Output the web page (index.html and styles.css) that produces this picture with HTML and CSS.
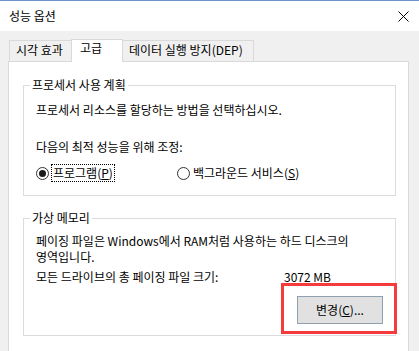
FILE: index.html
```html
<!DOCTYPE html>
<html>
<head>
    <meta charset="utf-8" />
    <link rel="stylesheet" href="styles.css">
</head>
<body>
    <section class="window">
        <header class="titlebar">
            <span class="title">성능 옵션</span>
            <svg class="close" width="11" height="11" viewBox="0 0 11 11">
                <path d="M0.5 0.5 L10.5 10.5 M10.5 0.5 L0.5 10.5" stroke="#000" stroke-width="1" fill="none" />
            </svg>
        </header>

        <div class="dialog">
            <nav class="tabs">
                <span class="tab first">시각 효과</span>
                <span class="tab active">고급</span>
                <span class="tab last">데이터 실행 방지(DEP)</span>
            </nav>

            <div class="panel">
                <fieldset class="group cpu">
                    <legend>프로세서 사용 계획</legend>
                    <p class="line">프로세서 리소스를 할당하는 방법을 선택하십시오.</p>
                    <p class="line adjust">다음의 최적 성능을 위해 조정:</p>
                    <div class="radios">
                        <label class="radio program">
                            <span class="dot checked"></span>
                            <span class="focus">프로그램(<u>P</u>)</span>
                        </label>
                        <label class="radio service">
                            <span class="dot"></span>
                            <span>백그라운드 서비스(<u>S</u>)</span>
                        </label>
                    </div>
                </fieldset>

                <fieldset class="group memory">
                    <legend>가상 메모리</legend>
                    <p class="line">페이징 파일은 Windows에서 RAM처럼 사용하는 하드 디스크의<br>영역입니다.</p>
                    <p class="line total">
                        <span class="total-label">모든 드라이브의 총 페이징 파일 크기:</span>
                        <span>3072 MB</span>
                    </p>
                    <div class="actions">
                        <button class="btn">변경(<u>C</u>)...</button>
                        <div class="highlight"></div>
                    </div>
                </fieldset>
            </div>
        </div>
    </section>
</body>
</html>
```

FILE: styles.css
```css
* {
    padding: 0;
    margin: 0;
    box-sizing: border-box;
}

body {
    width: 419px;
    height: 351px;
    overflow: hidden;
    font-family: "Noto Sans CJK KR", "Noto Sans", sans-serif;
    font-size: 12px;
    line-height: 16px;
    color: #000;
    background-color: #f0f0f0;
}

.window {
    display: flex;
    flex-direction: column;
    height: 351px;
}

.titlebar {
    display: flex;
    align-items: center;
    justify-content: space-between;
    height: 31px;
    padding: 0 10px 0 9px;
    background-color: #fff;
    border-top: 1px solid #6b95c8;
}

.title {
    font-size: 12px;
}

.close {
    display: block;
}

.dialog {
    flex: 1;
    display: flex;
    flex-direction: column;
    padding: 8px 10px 0 8px;
}

.tabs {
    display: flex;
    align-items: flex-end;
    height: 22px;
    padding-left: 1px;
    position: relative;
    z-index: 1;
}

.tab {
    height: 21px;
    padding: 1px 6px 0;
    border: 1px solid #d9d9d9;
    border-bottom: none;
    background-color: #f0f0f0;
    white-space: nowrap;
}

.tab.first {
    width: 63px;
}

.tab.active {
    width: 52px;
    height: 23px;
    margin: 0 -1px -1px -1px;
    padding: 0 8px;
    background-color: #fff;
}

.tab.last {
    width: 132px;
}

.panel {
    flex: 1;
    display: flex;
    flex-direction: column;
    background-color: #fff;
    border: 1px solid #d9d9d9;
    border-bottom: none;
    padding: 15px 12px 0 14px;
}

.group {
    border: 1px solid #dcdcdc;
    padding: 9px 12px 14px 12px;
}

.group legend {
    margin-left: -6px;
    padding: 0 2px;
    line-height: 16px;
}

.line.adjust {
    margin-top: 21px;
}

.radios {
    display: flex;
    margin-top: 10px;
}

.radio {
    display: flex;
    align-items: center;
    gap: 3px;
}

.radio.service {
    margin-left: 63px;
}

.dot {
    width: 13px;
    height: 13px;
    border: 1px solid #333;
    border-radius: 50%;
    display: flex;
    align-items: center;
    justify-content: center;
}

.dot.checked::after {
    content: "";
    width: 7px;
    height: 7px;
    border-radius: 50%;
    background-color: #1a1a1a;
}

.focus {
    outline: 1px dotted #000;
    padding: 0 1px;
}

.memory {
    margin-top: 14px;
    padding: 7px 12px 11px 12px;
}

.line.total {
    display: flex;
    margin-top: 4px;
}

.total-label {
    width: 248px;
}

.actions {
    display: flex;
    justify-content: flex-end;
    margin-top: 11px;
    position: relative;
}

.btn {
    width: 86px;
    height: 28px;
    font: inherit;
    background-color: #e1e1e1;
    border: 1px solid #8fa0b1;
    color: #000;
}

.highlight {
    position: absolute;
    right: -14px;
    top: -13px;
    width: 116px;
    height: 51px;
    border: 3px solid #f53b3b;
    pointer-events: none;
}
```
